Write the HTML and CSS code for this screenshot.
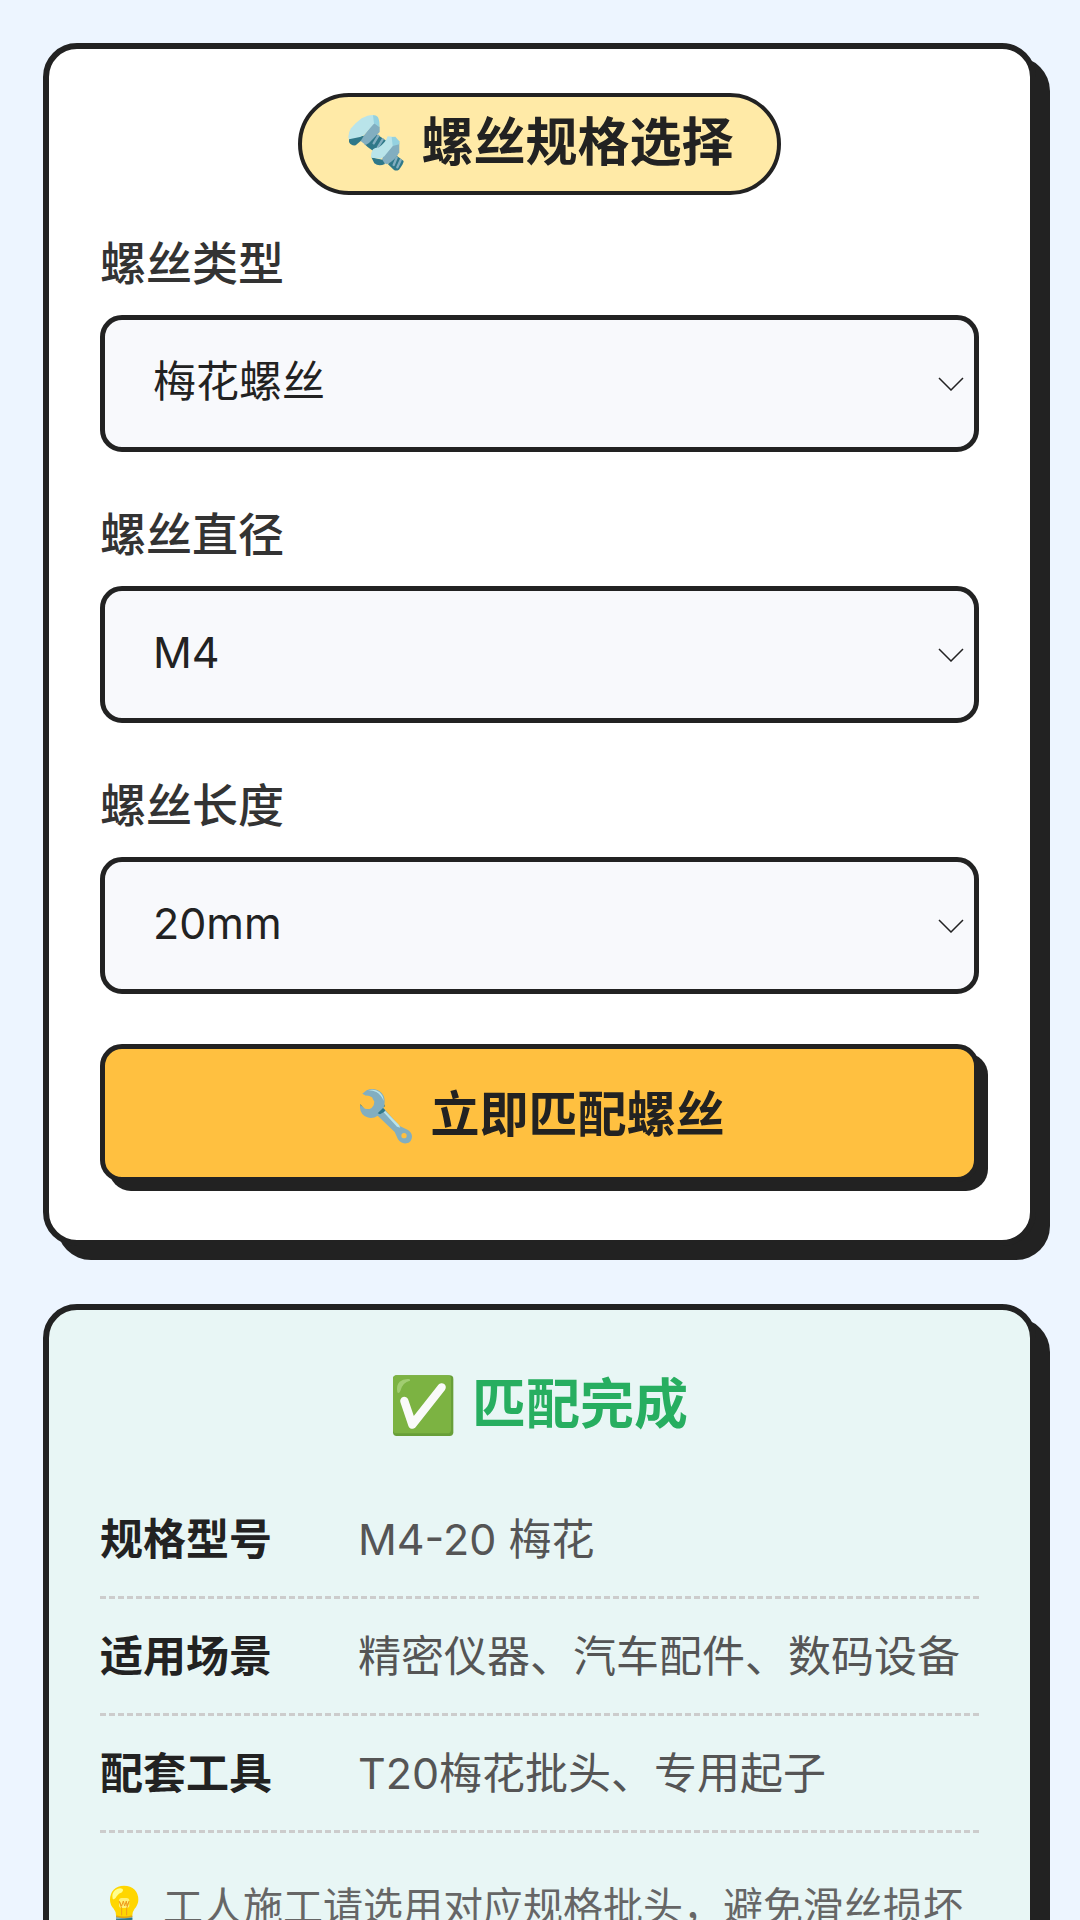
FILE: index.html
```html
<!DOCTYPE html>
<html lang="zh-CN">

<head>
    <meta charset="UTF-8">
    <meta name="viewport" content="width=device-width, initial-scale=1.0">
    <title>螺丝规格选择</title>
    <link rel="stylesheet" href="styles.css">
</head>

<body>
    <main class="page">
        <!-- 规格选择 -->
        <form class="card" id="screwForm">
            <h1 class="card-title">
                <svg class="emoji" viewBox="18 21 192 192" aria-hidden="true">
                    <path fill="#2f7889" d="M112 90l32 22-28 32q-18-2-40-24z" />
                    <path stroke="#82aec0" stroke-width="7" stroke-linecap="round" d="M118 95l-14 23M131 106l-14 23" />
                    <path fill="#82aec0" d="M105 55l17 14v15l-32 33-10 6-16-13 11-16z" />
                    <path fill="#2f7889" d="M30 102l45-7-10 16-15 13q-14 2-20-10z" />
                    <path fill="#b9e4ea" d="M28 99q0-14 8-26 14-17 32-30 20-11 36-10l4 7-2 18-31 35-12 6-33 7z" />
                    <path fill="#94d1e0" d="M102 34q13-2 17 11 3 8 3 25l-17-12z" />
                    <path fill="#2f7889" d="M165 149l29 22q0 8-14 26-8 5-15 1l-18-17z" />
                    <path stroke="#82aec0" stroke-width="7" stroke-linecap="round" d="M173 161l-9 22M185 168l-10 22" />
                    <path fill="#82aec0" d="M162 124l19-9v30q-12 24-37 36l-17-6 6-21z" />
                    <path fill="#2f7889" d="M97 160l33 7 8 13q-19 8-32-2z" />
                    <path fill="#b9e4ea" d="M96 160q0-16 6-24 8-6 16-5 23-15 28-34l14 1 6 5-4 22-26 32-11 7-28-3z" />
                    <path fill="#94d1e0" d="M158 99l11-1 12 14v9l-20 5z" />
                </svg>
                <span>螺丝规格选择</span>
            </h1>

            <div class="form-item">
                <label for="screwType">螺丝类型</label>
                <div class="select-box">
                    <select id="screwType">
                        <option selected>梅花螺丝</option>
                    </select>
                    <svg class="arrow" viewBox="0 0 26 14" aria-hidden="true"><path d="M1 1l12 12L25 1" /></svg>
                </div>
            </div>

            <div class="form-item">
                <label for="screwDiameter">螺丝直径</label>
                <div class="select-box">
                    <select id="screwDiameter">
                        <option selected>M4</option>
                    </select>
                    <svg class="arrow" viewBox="0 0 26 14" aria-hidden="true"><path d="M1 1l12 12L25 1" /></svg>
                </div>
            </div>

            <div class="form-item">
                <label for="screwLength">螺丝长度</label>
                <div class="select-box">
                    <select id="screwLength">
                        <option selected>20mm</option>
                    </select>
                    <svg class="arrow" viewBox="0 0 26 14" aria-hidden="true"><path d="M1 1l12 12L25 1" /></svg>
                </div>
            </div>

            <button class="match-btn" type="button">
                <svg class="emoji" viewBox="72 35 192 192" aria-hidden="true">
                    <path fill="#2f7889" d="M91 98q-2 16 14 26 16 9 36-1l14-12 10-6-8-18-30 30-24-4z" />
                    <path fill="#82aec0" d="M97 67l13-10q20-9 38 2 17 11 16 34-1 12-4 17l49 54 25 12q12 8 12 20-1 17-17 20-16 2-25-12l-10-22-51-49q-14 10-31 5-20-7-22-28l1-9 14 11 12 2q10-3 14-12l2-11-7-13q-10-6-18-5z" />
                    <path fill="#b9e4ea" d="M113 57q20-6 35 5 13 11 13 27-8-20-22-27-12-6-26-5zM165 118l42 43 4 8-10-3-40-43z" />
                    <path fill="#2f7889" d="M143 126l16-16 7 7-4 5-12 7z" />
                    <circle cx="222" cy="193" r="8" fill="#ffc040" />
                </svg>
                <span>立即匹配螺丝</span>
            </button>
        </form>

        <!-- 匹配结果 -->
        <section class="card result">
            <h2 class="result-title">
                <svg class="emoji" viewBox="63 66 192 192" aria-hidden="true">
                    <rect x="69" y="73" width="181" height="182" rx="11" fill="#689f38" />
                    <rect x="69" y="73" width="174" height="174" rx="11" fill="#7cb342" />
                    <path fill="#aed581" opacity=".75" d="M82 124q-4-22 7-32 10-9 27-8 6 1 4 5-22 4-29 31-4 9-9 4z" />
                    <path fill="none" stroke="#fafafa" stroke-width="25" stroke-linecap="round" stroke-linejoin="round" d="M103 150l24 71 88-112" />
                </svg>
                <span>匹配完成</span>
            </h2>

            <dl class="result-list">
                <div class="result-row">
                    <dt>规格型号</dt>
                    <dd>M4-20 梅花</dd>
                </div>
                <div class="result-row">
                    <dt>适用场景</dt>
                    <dd>精密仪器、汽车配件、数码设备</dd>
                </div>
                <div class="result-row">
                    <dt>配套工具</dt>
                    <dd>T20梅花批头、专用起子</dd>
                </div>
            </dl>

            <p class="tip">
                <svg class="emoji emoji-small" viewBox="60 1206 150 150" aria-hidden="true">
                    <path fill="#82aec0" d="M108 1308h49v30q-4 15-24 16-21-1-25-16z" />
                    <path fill="#2f7889" d="M108 1318l49-5v6l-49 6zM108 1331l49-5v6l-49 6z" />
                    <path fill="#ffd600" d="M132 1217q20 0 32 12 11 12 11 30 0 14-11 27-7 9-7 20-5 6-25 6-20 0-24-6 0-12-7-20-11-12-11-27 0-18 11-30 12-12 31-12z" />
                    <path fill="#ffff8d" d="M98 1256q-4-16 8-26 12-8 22-3 3 4-2 10-10 3-16 12-6 13-12 7z" />
                    <rect x="117" y="1254" width="31" height="30" rx="8" fill="#fff176" />
                    <path fill="none" stroke="#ef9d1d" stroke-width="3" d="M125 1306v-21l-7-21 7 14 5-15 4 15 5-15 2 15 6-14-7 21v21" />
                    <path fill="#e2a610" d="M108 1306q24 7 49 0v5q-25 7-49 0z" />
                </svg>
                <span>工人施工请选用对应规格批头，避免滑丝损坏</span>
            </p>
        </section>
    </main>
</body>

</html>
```
FILE: styles.css
```css
* {
    margin: 0;
    padding: 0;
    box-sizing: border-box;
}

/* 页面整体样式 */
body {
    min-height: 100vh;
    background-color: #edf5ff;
    color: #222;
    font-family: Inter, "Noto Sans CJK SC", sans-serif;
    font-size: 43px;
    line-height: 64px;
}

.page {
    display: flex;
    flex-direction: column;
    gap: 58px;
    padding: 43px 44px 43px 43px;
}

/* 卡片 */
.card {
    padding: 44px 51px 58px;
    background-color: #fff;
    border: 6px solid #222;
    border-radius: 34px;
    box-shadow: 14px 14px 0 #222;
}

.card-title {
    display: flex;
    align-items: center;
    gap: 12px;
    width: fit-content;
    margin: 0 auto 36px;
    padding: 10px 43px 12px;
    background-color: #ffeaa7;
    border: 4px solid #222;
    border-radius: 52px;
    font-size: 52px;
    font-weight: 700;
    line-height: 72px;
}

/* 图标 */
.emoji {
    flex: none;
    width: 64px;
    height: 64px;
}

.emoji-small {
    width: 50px;
    height: 50px;
}

/* 表单 */
.form-item {
    margin-bottom: 50px;
}

.form-item label {
    display: block;
    margin-bottom: 20px;
    color: #333;
    font-size: 46px;
    font-weight: 500;
}

.select-box {
    position: relative;
}

.select-box select {
    display: block;
    width: 100%;
    height: 137px;
    padding: 0 48px 5px;
    appearance: none;
    background-color: #f8f9fc;
    border: 5px solid #222;
    border-radius: 22px;
    color: #222;
    font: inherit;
}

.select-box .arrow {
    position: absolute;
    top: 50%;
    right: 15px;
    width: 26px;
    height: 14px;
    transform: translateY(-50%);
    fill: none;
    stroke: #222;
    stroke-width: 1.5;
    pointer-events: none;
}

.match-btn {
    display: flex;
    justify-content: center;
    align-items: center;
    gap: 12px;
    width: 100%;
    height: 138px;
    padding-top: 3px;
    background-color: #ffc040;
    border: 5px solid #222;
    border-radius: 22px;
    box-shadow: 9px 9px 0 #222;
    color: #222;
    font: inherit;
    font-size: 49px;
    font-weight: 700;
    cursor: pointer;
}

/* 匹配结果 */
.result {
    padding-top: 53px;
    background-color: #e8f6f5;
}

.result-title {
    display: flex;
    justify-content: center;
    align-items: center;
    gap: 17px;
    margin-bottom: 35px;
    color: #27ae60;
    font-size: 54px;
    font-weight: 700;
    line-height: 84px;
}

.result-row {
    display: flex;
    padding: 25px 0;
    border-bottom: 3px dashed #ccc;
}

.result-row dt {
    flex: none;
    width: 6em;
    font-weight: 700;
}

.result-row dd {
    flex: 1;
    color: #555;
}

.tip {
    display: flex;
    align-items: center;
    gap: 13px;
    margin-top: 44px;
    color: #666;
    font-size: 40px;
    line-height: 60px;
}
```
